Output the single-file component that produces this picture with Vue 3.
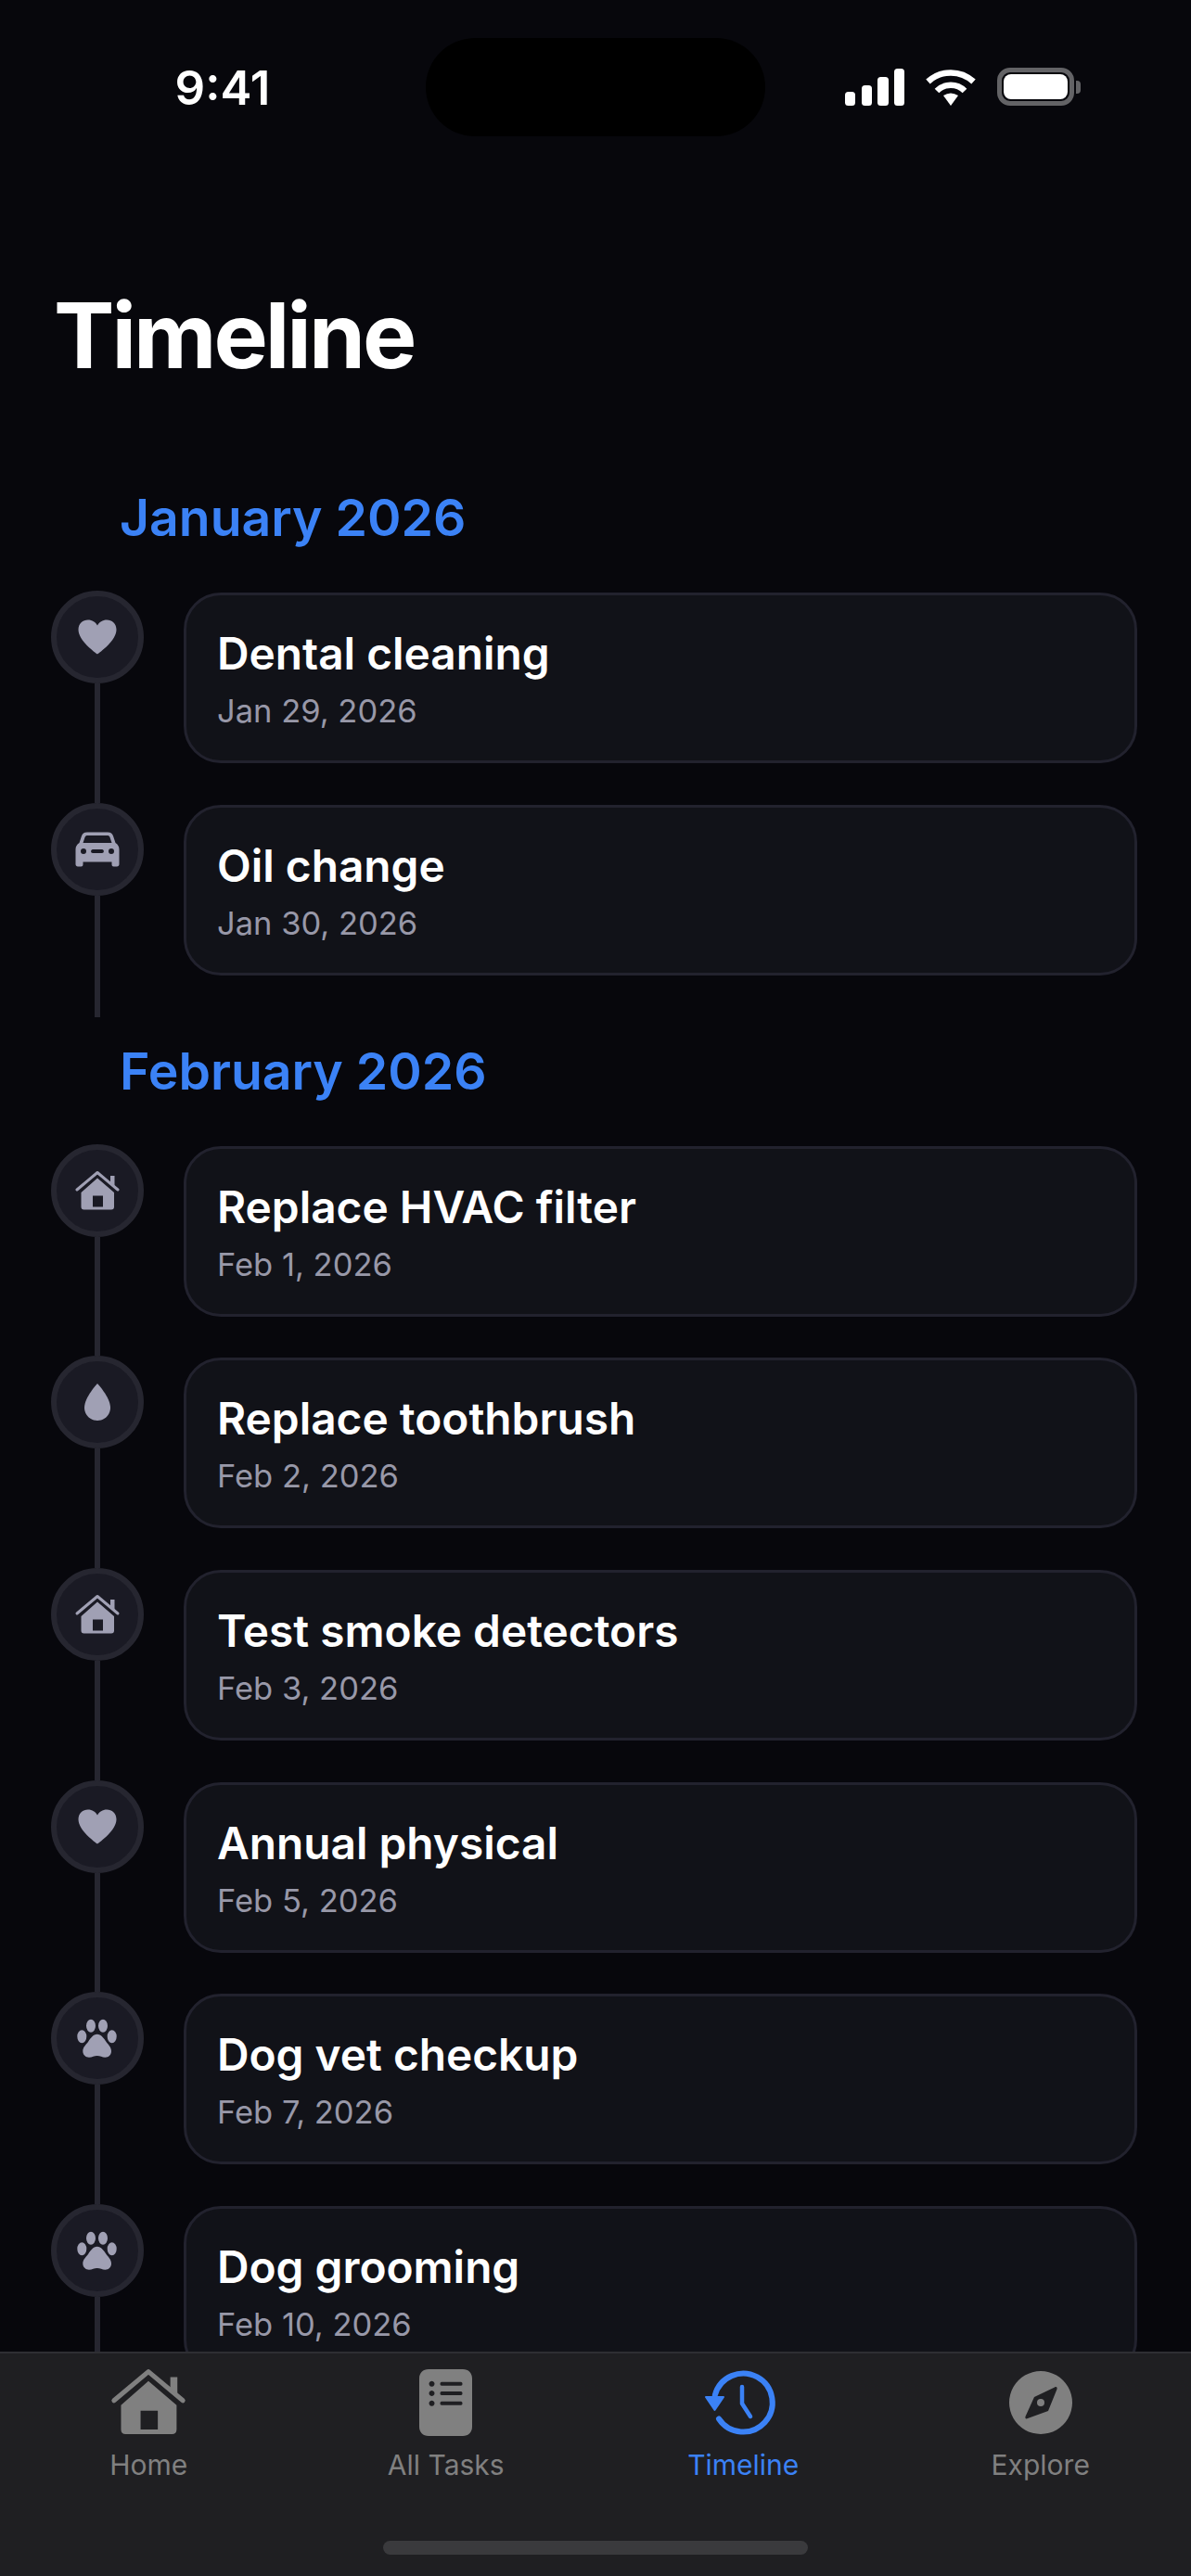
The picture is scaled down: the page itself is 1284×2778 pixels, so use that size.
<script setup>
const ell = (x, y, rx, ry) => `M${x - rx} ${y}a${rx} ${ry} 0 1 0 ${2 * rx} 0a${rx} ${ry} 0 1 0 ${-2 * rx} 0Z`
const house = {
  fill: 'M30 16.5L48 32V47.5C48 49.5 47 50.5 45 50.5H15.5C13.5 50.5 12.5 49.5 12.5 47.5V32ZM25 35.5V47.5H36V35.5ZM44 14H48.5V25L44 21Z',
  stroke: 'M8 29L30 10.5L52 29'
}
const paw = {
  fill: 'M29.7 25.7C34 25.7 37 30 39.5 34C42 37 45 40 45 44C45 48 42 50.7 38.5 50.7C35 50.7 33 49 29.7 49C26.5 49 24.5 50.7 21 50.7C17.5 50.7 14.3 48 14.3 44C14.3 40 17.5 37 20 34C22.5 30 25.5 25.7 29.7 25.7Z' +
    ell(13.3, 28.3, 5, 7) + ell(23, 16.7, 5, 7) + ell(36, 16.7, 5, 7) + ell(45.7, 28.3, 5, 7)
}
const icons = {
  heart: { fill: 'M30 48.5C28 47 9.5 34 9.5 22C9.5 15.5 14.5 11.5 19.8 11.5C24.5 11.5 28 14 30 17.5C32 14 35.5 11.5 40.2 11.5C45.5 11.5 50.5 15.5 50.5 22C50.5 34 32 47 30 48.5Z' },
  car: { fill: 'M19 11.5H41C44.5 11.5 46 13 47 15.5L49.5 23C52 24.5 53.5 27 53.5 30V46C53.5 47.5 52.5 48.5 51 48.5H47.5C46 48.5 45.5 47.5 45.5 46V43.5H14.5V46C14.5 47.5 14 48.5 12.5 48.5H9C7.5 48.5 6.5 47.5 6.5 46V30C6.5 27 8 24.5 10.5 23L13 15.5C14 13 15.5 11.5 19 11.5ZM19.5 15C18 15 17 15.5 16.5 17L14.5 23H45.5L43.5 17C43 15.5 42 15 40.5 15Z' + ell(15, 32, 3, 3) + ell(45, 32, 3, 3) + 'M25 30H35C37.5 30 37.5 34 35 34H25C22.5 34 22.5 30 25 30Z' },
  house,
  drop: { fill: 'M30 10C30 10 16 25 16 36C16 44 22.5 50 30 50C37.5 50 44 44 44 36C44 25 30 10 30 10Z' },
  paw
}
const sections = [
  { month: 'January 2026', items: [
    { icon: 'heart', title: 'Dental cleaning', date: 'Jan 29, 2026' },
    { icon: 'car', title: 'Oil change', date: 'Jan 30, 2026' }
  ] },
  { month: 'February 2026', items: [
    { icon: 'house', title: 'Replace HVAC filter', date: 'Feb 1, 2026' },
    { icon: 'drop', title: 'Replace toothbrush', date: 'Feb 2, 2026' },
    { icon: 'house', title: 'Test smoke detectors', date: 'Feb 3, 2026' },
    { icon: 'heart', title: 'Annual physical', date: 'Feb 5, 2026' },
    { icon: 'paw', title: 'Dog vet checkup', date: 'Feb 7, 2026' },
    { icon: 'paw', title: 'Dog grooming', date: 'Feb 10, 2026' }
  ] }
]
</script>

<template>
  <div class="phone">
    <header class="status">
      <div class="time">9:41</div>
      <div class="island"></div>
      <div class="indicators">
        <svg class="signal" width="64" height="40" viewBox="0 0 64 40">
          <rect x="0" y="25" width="11" height="15" rx="3.5" />
          <rect x="18" y="18" width="11" height="22" rx="3.5" />
          <rect x="35" y="9" width="12" height="31" rx="3.5" />
          <rect x="53" y="0" width="11" height="40" rx="3.5" />
        </svg>
        <svg class="wifi" width="56" height="40" viewBox="0 0 56 40">
          <path d="M3.5 14A36 36 0 0 1 52.5 14" />
          <path d="M13 24A21 21 0 0 1 43 24" />
          <path class="wedge" d="M20 29Q28 24 36 29L28 40Z" />
        </svg>
        <div class="battery"><div class="charge"></div></div>
        <div class="cap"></div>
      </div>
    </header>

    <main class="scroll">
      <h1 class="title">Timeline</h1>
      <section v-for="s in sections" :key="s.month" class="section">
        <h2 class="month">{{ s.month }}</h2>
        <div v-for="it in s.items" :key="it.title" class="item">
          <div class="rail">
            <div class="dot">
              <svg width="60" height="60" viewBox="0 0 60 60">
                <path v-if="icons[it.icon].stroke" class="roof" :d="icons[it.icon].stroke" />
                <path class="glyph" :d="icons[it.icon].fill" />
              </svg>
            </div>
            <div class="line"></div>
          </div>
          <article class="card">
            <div class="card-title">{{ it.title }}</div>
            <div class="card-date">{{ it.date }}</div>
          </article>
        </div>
      </section>
    </main>

    <nav class="tabs">
      <div class="tab-row">
        <div class="tab">
          <svg class="tab-icon" width="80" height="72" viewBox="6.3 9 47.4 42.6">
            <path class="roof tab-roof" :d="house.stroke" />
            <path class="tab-fill" :d="house.fill" />
          </svg>
          <span>Home</span>
        </div>
        <div class="tab">
          <svg class="tab-icon" width="57" height="72" viewBox="0 0 57 72">
            <path class="tab-fill" d="M10 0H47C53 0 57 4 57 10V62C57 68 53 72 47 72H10C4 72 0 68 0 62V10C0 4 4 0 10 0ZM13.5 12.7a3 3 0 1 0 0.01 0ZM13.5 23a3 3 0 1 0 0.01 0ZM13.5 33.7a3 3 0 1 0 0.01 0ZM24 13.7C22 13.7 22 17.7 24 17.7H45C47 17.7 47 13.7 45 13.7ZM24 24C22 24 22 28 24 28H45C47 28 47 24 45 24ZM24 34.7C22 34.7 22 38.7 24 38.7H45C47 38.7 47 34.7 45 34.7Z" />
          </svg>
          <span>All Tasks</span>
        </div>
        <div class="tab active">
          <svg class="tab-icon" width="80" height="72" viewBox="3 0 80 72">
            <path class="clock" d="M12.8 28A31.5 31.5 0 1 1 17 53.5" />
            <path class="hands" d="M42 19V37L51 51" />
            <path class="arrow" d="M3 30H22L12.5 44Z" />
          </svg>
          <span>Timeline</span>
        </div>
        <div class="tab">
          <svg class="tab-icon" width="68" height="72" viewBox="0 0 68 72">
            <path class="tab-fill" d="M34 2a34 34 0 1 0 0.01 0ZM49 19.5C51 18.5 52 19.5 51.5 21.5L42 45L20 53C18 54 17 53 17.5 51L27 30Z" />
            <circle class="tab-dot" cx="34" cy="36" r="4" />
          </svg>
          <span>Explore</span>
        </div>
      </div>
      <div class="home-indicator"></div>
    </nav>
  </div>
</template>

<style scoped>
.phone {
  width: 1284px;
  height: 2778px;
  display: flex;
  flex-direction: column;
  overflow: hidden;
  background: #07070c;
  color: #fff;
  font-family: Inter, "Noto Sans", sans-serif;
}
.status {
  flex: none;
  height: 147px;
  padding-top: 41px;
  box-sizing: border-box;
  display: flex;
  align-items: flex-start;
}
.time {
  width: 459px;
  padding-left: 21px;
  box-sizing: border-box;
  text-align: center;
  font-size: 51px;
  font-weight: 600;
  line-height: 62px;
  margin-top: 23px;
}
.island {
  width: 366px;
  height: 106px;
  border-radius: 53px;
  background: #000;
  flex: none;
}
.indicators {
  margin-left: 86px;
  margin-top: 32px;
  display: flex;
  align-items: center;
  height: 41px;
}
.signal { fill: #fff; }
.wifi {
  margin-left: 22px;
  fill: none;
  stroke: #fff;
  stroke-width: 6.5;
}
.wifi .wedge { fill: #fff; stroke: none; }
.battery {
  margin-left: 22px;
  width: 83px;
  height: 41px;
  box-sizing: border-box;
  border: 5px solid #636366;
  border-radius: 14px;
  padding: 2px;
}
.charge {
  width: 100%;
  height: 100%;
  background: #fff;
  border-radius: 8px;
}
.cap {
  margin-left: 2px;
  width: 5px;
  height: 14px;
  background: #636366;
  border-radius: 0 4px 4px 0;
}
.scroll {
  flex: 1;
  min-height: 0;
  overflow: hidden;
}
.title {
  margin: 153px 0 0 58px;
  font-size: 98px;
  line-height: 123px;
  font-weight: 700;
  height: 200px;
  letter-spacing: -3px;
}
.section { padding-left: 55px; }
.month {
  margin: 0;
  padding: 22px 0 43px 74px;
  font-size: 55.3px;
  line-height: 72px;
  font-weight: 600;
  color: #3b82f6;
}
.item {
  display: flex;
  height: 228.67px;
}
.item:last-child { height: 231px; }
.rail {
  flex: none;
  width: 100px;
  display: flex;
  flex-direction: column;
  align-items: center;
}
.dot {
  flex: none;
  width: 100px;
  height: 100px;
  box-sizing: border-box;
  border: 6px solid #262630;
  border-radius: 50%;
  background: #1a1a24;
  display: flex;
  align-items: center;
  justify-content: center;
}
.glyph {
  fill: #a0a0b4;
  fill-rule: evenodd;
}
.roof {
  fill: none;
  stroke: #a0a0b4;
  stroke-width: 3;
  stroke-linecap: round;
  stroke-linejoin: round;
}
.line {
  flex: 1;
  width: 6px;
  background: #262630;
}
.card {
  margin: 2px 0 0 43px;
  width: 1028px;
  height: 184px;
  box-sizing: border-box;
  padding: 34px 33px 0;
  background: #111218;
  border: 3px solid #22222e;
  border-radius: 40px;
}
.card-title {
  font-size: 47.8px;
  line-height: 58px;
  font-weight: 600;
}
.card-date {
  margin-top: 11px;
  font-size: 34.5px;
  line-height: 44px;
  color: #9898a8;
}
.tabs {
  flex: none;
  height: 242px;
  box-sizing: border-box;
  background: #1f1f22;
  border-top: 2px solid #2e2e33;
  display: flex;
  flex-direction: column;
  align-items: center;
}
.tab-row {
  display: flex;
  width: 100%;
  height: 202px;
  box-sizing: border-box;
  padding-right: 2px;
}
.tab {
  flex: 1;
  display: flex;
  flex-direction: column;
  align-items: center;
  color: #808080;
  font-size: 30px;
  line-height: 36px;
  font-weight: 400;
}
.tab.active { color: #3b82f6; }
.tab-icon {
  flex: none;
  display: block;
  margin-top: 17px;
  overflow: visible;
}
.tab-fill {
  fill: #808080;
  fill-rule: evenodd;
}
.tab-roof { stroke: #808080; }
.tab-dot { fill: #808080; }
.clock, .hands {
  fill: none;
  stroke: #3b82f6;
  stroke-linecap: round;
  stroke-linejoin: round;
}
.clock { stroke-width: 6; }
.hands { stroke-width: 4.5; }
.arrow {
  fill: #3b82f6;
  stroke: #3b82f6;
  stroke-width: 2;
  stroke-linejoin: round;
}
.tab span { margin-top: 13px; }
.home-indicator {
  width: 458px;
  height: 15px;
  border-radius: 8px;
  background: #3a3a3d;
}
</style>

<style>
html, body { background: #07070c; }
</style>
